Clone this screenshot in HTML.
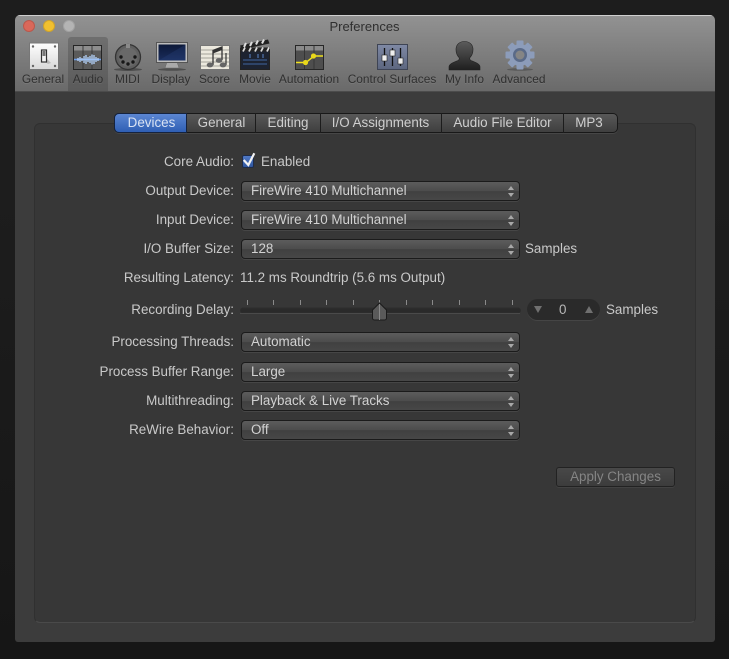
<!DOCTYPE html>
<html>
<head>
<meta charset="utf-8">
<style>
html,body{margin:0;padding:0;width:729px;height:659px;overflow:hidden;background:#1a1a1a}
body{position:relative;font-family:"Liberation Sans",sans-serif;font-size:13.4px;color:#c9c9c9;background:linear-gradient(#1d1d1d,#1d1d1d 30%,#161616)}
div{box-sizing:border-box}
.a{position:absolute;white-space:nowrap}
#win{left:15px;top:15px;width:700px;height:627px;background:#3c3c3c;border-radius:5px 5px 3px 3px;overflow:hidden}
#bar{left:0;top:0;width:700px;height:77px;background:linear-gradient(#929292,#888 25%,#6a6a6a);border-top:1px solid #cfcfcf;border-bottom:1px solid #4c4c4c}
#sel{left:68px;top:37px;width:40px;height:54px;background:rgba(50,50,50,.28);border-radius:3px 3px 0 0}
.t{position:absolute;top:72px;font-size:11.9px;color:#303030;line-height:14px;white-space:nowrap;transform:translateX(-50%);text-shadow:0 1px 0 rgba(255,255,255,.08)}
#panel{left:34px;top:123px;width:662px;height:500px;background:#373737;border:1px solid #303030;border-bottom-color:#4a4a4a;border-radius:6px}
#tabs{left:114px;top:113px;width:504px;height:20px;border-radius:5px;background:linear-gradient(#585858,#3f3f3f);border:1px solid #181818;box-shadow:0 1px 0 rgba(255,255,255,.08)}
.tab{position:absolute;top:109px;height:26px;line-height:28px;text-align:center;color:#cfcfcf}
.dv{position:absolute;top:113px;width:1px;height:20px;background:#1c1c1c}
.l{position:absolute;right:495px;text-align:right;white-space:nowrap;line-height:16px;margin-top:1px}
.p{position:absolute;left:241px;width:279px;height:20px;border:1px solid #1b1b1b;border-radius:4px;background:linear-gradient(#5c5c5c,#4c4c4c 50%,#404040 52%,#474747);box-shadow:0 1px 0 rgba(255,255,255,.08);line-height:17px;padding-left:9px;color:#d2d2d2}
.p:after{content:"";position:absolute;right:5px;top:4px;width:0;height:0;border-left:3px solid transparent;border-right:3px solid transparent;border-bottom:4px solid #a8a8a8}
.p:before{content:"";position:absolute;right:5px;top:11px;width:0;height:0;border-left:3px solid transparent;border-right:3px solid transparent;border-top:4px solid #a8a8a8}
.s{position:absolute;white-space:nowrap;line-height:16px;margin-top:1px}
</style>
</head>
<body>
<div class="a" id="win">
  <div class="a" id="bar"></div>
</div>
<div class="a" id="sel"></div>
<div class="a" style="left:0;width:729px;top:19px;text-align:center;font-size:13px;line-height:16px;color:#2f2f2f;">Preferences</div>

<div class="a" style="left:23px;top:20px;width:12px;height:12px;border-radius:50%;background:#d9685a;border:1px solid #b9584c"></div>
<div class="a" style="left:43px;top:20px;width:12px;height:12px;border-radius:50%;background:#f1c02f;border:1px solid #cfa32c"></div>
<div class="a" style="left:63px;top:20px;width:12px;height:12px;border-radius:50%;background:#b4b4b4;border:1px solid #a2a2a2"></div>

<svg class="a" style="left:0;top:0" width="729" height="92" viewBox="0 0 729 92">
  <defs>
    <linearGradient id="gw" x1="0" y1="0" x2="0" y2="1"><stop offset="0" stop-color="#fff"/><stop offset="1" stop-color="#d8d8d8"/></linearGradient>
    <linearGradient id="gs" x1="0" y1="0" x2="0" y2="1"><stop offset="0" stop-color="#0c1838"/><stop offset="1" stop-color="#1a2d5c"/></linearGradient>
    <linearGradient id="gc" x1="0" y1="0" x2="0" y2="1"><stop offset="0" stop-color="#7f89a5"/><stop offset="1" stop-color="#5c667f"/></linearGradient>
    <linearGradient id="gu" x1="0" y1="0" x2="0" y2="1"><stop offset="0" stop-color="#5b5b5b"/><stop offset="1" stop-color="#1f1f1f"/></linearGradient>
  </defs>
  <!-- General -->
  <rect x="29.5" y="43" width="29" height="26.500" fill="url(#gw)" stroke="#777"/>
  <g fill="#666"><circle cx="33" cy="46.500" r="1.200"/><circle cx="55" cy="46.500" r="1.200"/><circle cx="33" cy="66" r="1.200"/><circle cx="55" cy="66" r="1.200"/></g>
  <path d="M46 58l5 5-3 1-4-3z" fill="#aaa" opacity=".7"/>
  <rect x="41.500" y="50" width="5" height="12" fill="#f4f4f4" stroke="#333" stroke-width="1.200"/>
  <rect x="42.500" y="51" width="3" height="5" fill="#777"/>
  <!-- Audio -->
  <rect x="73.500" y="45.500" width="28" height="24" fill="#5a5a5a" stroke="#252525"/>
  <rect x="74" y="46" width="27" height="4.500" fill="#8d8d8d"/>
  <path d="M83 46v23M92 46v23" stroke="#3a3a3a"/>
  <path d="M74 59.500h27" stroke="#6f9ee8" stroke-width="1.500"/>
  <path d="M78 58v3M80 57v5M82 58v3M84 56v7M86 55v9M88 57v5M90 56v7M92 54.500v10M94 55v9M96 57v5M98 58v3" stroke="#b4d2fa" stroke-width="1.300"/>
  <!-- MIDI -->
  <ellipse cx="128" cy="69.500" rx="14" ry="1.500" fill="#333" opacity=".6"/>
  <circle cx="128" cy="57" r="12.500" fill="#5f5f5f" stroke="#333" stroke-width="1.300"/>
  <circle cx="128" cy="57" r="9.500" fill="#737373" opacity=".5"/>
  <rect x="126" y="44" width="4" height="4" fill="#8a8a8a"/>
  <g fill="#171717"><circle cx="121" cy="57" r="1.700"/><circle cx="135" cy="57" r="1.700"/><circle cx="123" cy="62" r="1.700"/><circle cx="133" cy="62" r="1.700"/><circle cx="128" cy="64" r="1.700"/></g>
  <!-- Display -->
  <ellipse cx="172" cy="69.500" rx="14" ry="1.300" fill="#333" opacity=".6"/>
  <path d="M167 62h10l2 6h-14z" fill="#aaa" stroke="#666" stroke-width=".5"/>
  <rect x="156.500" y="42.500" width="31" height="20" fill="#bcbcbc" stroke="#555"/>
  <rect x="158.500" y="44.500" width="27" height="16" fill="url(#gs)"/>
  <path d="M158.500 60.500l27-16v16z" fill="#2b4580" opacity=".3"/>
  <!-- Score -->
  <rect x="200.500" y="45.500" width="29" height="24" fill="#ece9de" stroke="#777"/>
  <path d="M201 50h28M201 54h28M201 58h28M201 62h28M201 66h28" stroke="#a5a39b"/>
  <path d="M213 65V50.500l9-3.500v3" fill="none" stroke="#333" stroke-width="1.300"/>
  <path d="M213 50.500l9-3.500v3l-9 3.500z" fill="#333"/>
  <path d="M222 50v10" stroke="#333" stroke-width="1.300"/>
  <path d="M226 53v12" stroke="#333" stroke-width="1.200"/>
  <ellipse cx="210" cy="65" rx="3.300" ry="2.400" fill="#666"/>
  <ellipse cx="219" cy="60.500" rx="3.300" ry="2.400" fill="#666"/>
  <ellipse cx="223" cy="65" rx="3.300" ry="2.400" fill="#666"/>
  <!-- Movie -->
  <rect x="240.500" y="50.500" width="29" height="19" fill="#1d2330" stroke="#222"/>
  <path d="M240 45.500l28-6 1.500 4-28 6z" fill="#222"/>
  <path d="M244 47l2-4M250 46l2-4M256 44.500l2-4M262 43.500l2-4" stroke="#ddd" stroke-width="2"/>
  <rect x="240" y="47.500" width="30" height="4" fill="#222"/>
  <path d="M243 51.500l2-4M249 51.500l2-4M255 51.500l2-4M261 51.500l2-4M267 51.500l2-4" stroke="#ddd" stroke-width="1.800"/>
  <path d="M243 60h24M243 64h24" stroke="#40659f"/>
  <path d="M250 54v4M258 54v4M263 54v4" stroke="#5c84c8"/>
  <!-- Automation -->
  <rect x="295.500" y="45.500" width="28" height="24" fill="#4e4e4e" stroke="#262626"/>
  <rect x="296" y="46" width="27" height="4.500" fill="#8a8a8a"/>
  <path d="M304.500 46v23M314 46v23" stroke="#353535"/>
  <path d="M296 62.500h10l8-6.500h9" fill="none" stroke="#f1e21e" stroke-width="1.400"/>
  <circle cx="305.500" cy="62.500" r="2.600" fill="#e9d81a"/>
  <circle cx="313.500" cy="56" r="2.600" fill="#e9d81a"/>
  <!-- Control Surfaces -->
  <rect x="377.500" y="44.500" width="30" height="25" fill="url(#gc)" stroke="#3e4454"/>
  <path d="M384.500 48v18M392.500 48v18M400.500 48v18" stroke="#111" stroke-width="1.300"/>
  <rect x="382" y="55" width="5" height="6" fill="#eee" stroke="#222" stroke-width=".6"/>
  <rect x="390" y="50" width="5" height="6" fill="#eee" stroke="#222" stroke-width=".6"/>
  <rect x="398" y="58" width="5" height="6" fill="#eee" stroke="#222" stroke-width=".6"/>
  <!-- My Info -->
  <path d="M449 70v-3c0-3 5-5 9-6.500 1.500-.7 1.500-2 1-3-2-2-3-5-3-8 0-4.500 3-8 8.500-8s8.500 3.500 8.500 8c0 3-1 6-3 8-.5 1-.5 2.300 1 3 4 1.500 9 3.500 9 6.500v3z" fill="url(#gu)" stroke="#222" stroke-width=".6"/>
  <!-- Advanced -->
  <ellipse cx="520" cy="69.500" rx="13" ry="1.300" fill="#333" opacity=".4"/>
  <g transform="translate(520 55)" fill="#8c9cba">
    <rect x="-3.500" y="-14.500" width="7" height="29" rx="1"/>
    <rect x="-3.500" y="-14.500" width="7" height="29" rx="1" transform="rotate(45)"/>
    <rect x="-3.500" y="-14.500" width="7" height="29" rx="1" transform="rotate(90)"/>
    <rect x="-3.500" y="-14.500" width="7" height="29" rx="1" transform="rotate(135)"/>
    <circle r="11"/>
    <circle r="7" fill="#5a6a88"/>
    <circle r="4.500" fill="#858585"/>
  </g>
</svg>

<div class="t" style="left:43px">General</div>
<div class="t" style="left:88px">Audio</div>
<div class="t" style="left:127.500px">MIDI</div>
<div class="t" style="left:171px">Display</div>
<div class="t" style="left:214.500px">Score</div>
<div class="t" style="left:255px">Movie</div>
<div class="t" style="left:309px">Automation</div>
<div class="t" style="left:392px">Control Surfaces</div>
<div class="t" style="left:464.500px">My Info</div>
<div class="t" style="left:519px">Advanced</div>

<div class="a" id="panel"></div>
<div class="a" id="tabs"></div>
<div class="a" style="left:114px;top:113px;width:73px;height:20px;border-radius:5px 0 0 5px;background:linear-gradient(#5b86d2,#2f5fb4);border:1px solid #15233f"></div>
<div class="tab" style="left:116px;width:71px;color:#d8e2f3">Devices</div>
<div class="tab" style="left:187px;width:69px">General</div>
<div class="tab" style="left:256px;width:64px">Editing</div>
<div class="tab" style="left:320px;width:121px">I/O Assignments</div>
<div class="tab" style="left:442px;width:121px">Audio File Editor</div>
<div class="tab" style="left:564px;width:50px">MP3</div>
<div class="dv" style="left:255px"></div>
<div class="dv" style="left:320px"></div>
<div class="dv" style="left:441px"></div>
<div class="dv" style="left:563px"></div>

<div class="l" style="top:153px">Core Audio:</div>
<div class="a" style="left:242px;top:155px;width:12px;height:13px;border-radius:2px;background:linear-gradient(#4f78c4,#2f569f);border:1px solid #1e2b48"></div>
<svg class="a" style="left:241px;top:151px" width="16" height="18" viewBox="0 0 16 18"><path d="M2.700 9l4.600 5 6-11.700" fill="none" stroke="#f2f2f2" stroke-width="2.200"/></svg>
<div class="s" style="left:261px;top:153px">Enabled</div>

<div class="l" style="top:182px">Output Device:</div>
<div class="p" style="top:181px">FireWire 410 Multichannel</div>
<div class="l" style="top:211px">Input Device:</div>
<div class="p" style="top:210px">FireWire 410 Multichannel</div>
<div class="l" style="top:240px">I/O Buffer Size:</div>
<div class="p" style="top:239px">128</div>
<div class="s" style="left:525px;top:240px">Samples</div>
<div class="l" style="top:269px">Resulting Latency:</div>
<div class="s" style="left:240px;top:269px">11.2 ms Roundtrip (5.6 ms Output)</div>

<div class="l" style="top:301px">Recording Delay:</div>
<svg class="a" style="left:236px;top:296px" width="290" height="28" viewBox="236 296 290 28">
  <rect x="240.500" y="308" width="280" height="5" rx="2.500" fill="#2a2a2a" stroke="#2d2d2d"/>
  <path d="M240 313.500h280" stroke="#4a4a4a"/>
  <path d="M247.500 300v5M273.500 300v5M300.500 300v5M326.500 300v5M353.500 300v5M379.500 300v5M406.500 300v5M432.500 300v5M459.500 300v5M485.500 300v5M512.500 300v5" stroke="#8a8a8a"/>
  <path d="M372.500 310l7-7 7 7v8a2 2 0 0 1-2 2h-10a2 2 0 0 1-2-2z" fill="#5a5a5a" stroke="#1b1b1b"/>
  <path d="M379.500 304v16" stroke="#888"/>
</svg>
<div class="a" style="left:527px;top:299px;width:73px;height:21px;border-radius:11px;background:#2a2a2a;box-shadow:0 1px 0 rgba(255,255,255,.07)"></div>
<div class="a" style="left:534px;top:306px;width:0;height:0;border-left:4.500px solid transparent;border-right:4.500px solid transparent;border-top:7px solid #707070"></div>
<div class="a" style="left:585px;top:306px;width:0;height:0;border-left:4.500px solid transparent;border-right:4.500px solid transparent;border-bottom:7px solid #707070"></div>
<div class="s" style="left:559px;top:301px;color:#b8b8b8">0</div>
<div class="s" style="left:606px;top:301px">Samples</div>

<div class="l" style="top:333px">Processing Threads:</div>
<div class="p" style="top:332px">Automatic</div>
<div class="l" style="top:363px">Process Buffer Range:</div>
<div class="p" style="top:362px">Large</div>
<div class="l" style="top:392px">Multithreading:</div>
<div class="p" style="top:391px">Playback &amp; Live Tracks</div>
<div class="l" style="top:421px">ReWire Behavior:</div>
<div class="p" style="top:420px">Off</div>

<div class="a" style="left:556px;top:467px;width:119px;height:20px;border:1px solid #222;border-radius:3px;background:linear-gradient(#484848,#3c3c3c);text-align:center;line-height:18px;color:#858585;box-shadow:0 1px 0 rgba(255,255,255,.06)">Apply Changes</div>
</body>
</html>
